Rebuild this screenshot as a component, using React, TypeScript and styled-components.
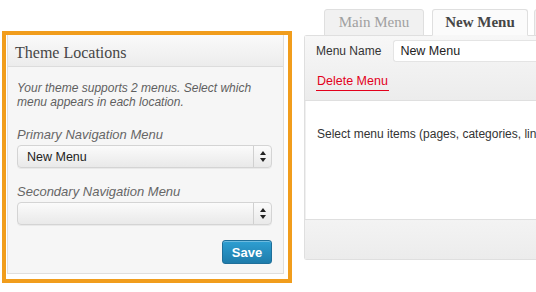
import React from 'react';
import styled, { createGlobalStyle } from 'styled-components';

const GlobalStyle = createGlobalStyle`
  html, body {
    margin: 0;
    padding: 0;
    background: #ffffff;
  }
  body {
    font-family: "Liberation Sans", Arial, sans-serif;
    overflow: hidden;
  }
`;

const Page = styled.div`
  width: 536px;
  height: 292px;
  display: flex;
  align-items: flex-start;
  overflow: hidden;
`;

const Highlight = styled.div`
  flex-shrink: 0;
  margin: 31px 0 0 2px;
  width: 290px;
  height: 252px;
  box-sizing: border-box;
  border: 4px solid #f19d1c;
  padding: 0 4px 5px 1px;
  display: flex;
`;

const Panel = styled.div`
  flex: 1;
  display: flex;
  flex-direction: column;
  border: 1px solid #dfdfdf;
  border-top: none;
  background: #f6f6f6;
`;

const PanelHeader = styled.div`
  height: 32px;
  box-sizing: border-box;
  padding: 4px 0 0 7px;
  display: flex;
  align-items: center;
  font-family: Georgia, "Liberation Serif", serif;
  font-size: 16px;
  color: #464646;
  background: linear-gradient(#fafafa, #ececec);
  border-bottom: 1px solid #dcdcdc;
`;

const PanelBody = styled.div`
  flex: 1;
  padding: 14px 11px 0 9px;
  display: flex;
  flex-direction: column;
`;

const Hint = styled.p`
  margin: 0 0 18px;
  font-style: italic;
  font-size: 12px;
  line-height: 14px;
  color: #5f5f5f;
`;

const FieldLabel = styled.div`
  font-style: italic;
  font-size: 13px;
  line-height: 15px;
  color: #666;
  margin-bottom: 3px;
`;

const Select = styled.div`
  height: 23px;
  box-sizing: border-box;
  display: flex;
  align-items: stretch;
  border: 1px solid #d4d4d4;
  border-radius: 4px;
  background: linear-gradient(#fbfbfb, #e9e9e9);
  box-shadow: 0 1px 0 rgba(0, 0, 0, 0.05);
  margin-bottom: 16px;
`;

const SelectValue = styled.div`
  flex: 1;
  padding-left: 9px;
  display: flex;
  align-items: center;
  font-size: 12.5px;
  color: #222;
`;

const SelectArrow = styled.div`
  width: 17px;
  border-left: 1px solid #d0d0d0;
  display: flex;
  align-items: center;
  justify-content: center;
`;

const Actions = styled.div`
  display: flex;
  justify-content: flex-end;
  margin-top: -1px;
`;

const SaveButton = styled.button`
  height: 24px;
  width: 50px;
  padding: 0;
  border: 1px solid #1f6f9a;
  border-radius: 3px;
  background: linear-gradient(#2e9fd2, #1e7cab);
  color: #fff;
  font-family: "Liberation Sans", Arial, sans-serif;
  font-weight: bold;
  font-size: 13px;
  box-shadow: inset 0 1px 0 rgba(255, 255, 255, 0.3);
`;

const Editor = styled.div`
  margin: 9px 0 0 12px;
  flex: 1;
  min-width: 0;
  display: flex;
  flex-direction: column;
`;

const Tabs = styled.div`
  display: flex;
  gap: 8px;
  padding-left: 20px;
  height: 27px;
  position: relative;
  z-index: 1;
  margin-bottom: -1px;
`;

const Tab = styled.div<{ $active?: boolean }>`
  width: ${p => (p.$active ? 96 : 100)}px;
  box-sizing: border-box;
  display: flex;
  align-items: center;
  justify-content: center;
  border: 1px solid #dfdfdf;
  border-bottom: 1px solid ${p => (p.$active ? '#f7f7f7' : '#dfdfdf')};
  border-radius: 3px 3px 0 0;
  background: ${p => (p.$active ? '#fbfbfb' : '#f1f1f1')};
  font-family: Georgia, "Liberation Serif", serif;
  font-size: 15px;
  font-weight: ${p => (p.$active ? 'bold' : 'normal')};
  color: ${p => (p.$active ? '#464646' : '#a0a0a0')};
  flex-shrink: 0;

  & + & + & {
    margin-left: -2px;
  }
`;

const MenuBox = styled.div`
  width: 320px;
  border: 1px solid #dfdfdf;
  border-right: none;
  border-radius: 3px 0 0 3px;
  display: flex;
  flex-direction: column;
  background: #fff;
`;

const MenuHeader = styled.div`
  height: 65px;
  box-sizing: border-box;
  padding: 4px 0 0 11px;
  background: linear-gradient(#f7f7f7, #ececec);
  border-bottom: 1px solid #dfdfdf;
`;

const NameRow = styled.div`
  display: flex;
  align-items: center;
  gap: 12px;
`;

const NameLabel = styled.span`
  font-size: 12px;
  color: #333;
`;

const NameInput = styled.div`
  flex: 1;
  height: 22px;
  box-sizing: border-box;
  padding-left: 6px;
  display: flex;
  align-items: center;
  background: #fff;
  border: 1px solid #e4e4e4;
  border-right: none;
  border-radius: 3px 0 0 3px;
  font-size: 12.5px;
  color: #222;
`;

const DeleteLink = styled.span`
  display: inline-block;
  margin-top: 12px;
  font-size: 12.5px;
  color: #e3001b;
  padding: 0 1px 2px 1px;
  border-bottom: 1px solid #e3001b;
`;

const MenuBody = styled.div`
  height: 118px;
  box-sizing: border-box;
  padding: 26px 0 0 11px;
  font-size: 12px;
  color: #333;
  white-space: nowrap;
  overflow: hidden;
  border-left: 1px solid #f0f0f0;
`;

const MenuFooter = styled.div`
  height: 39px;
  background: linear-gradient(#f3f3f3, #ececec);
  border-top: 1px solid #dfdfdf;
`;

const Arrows = () => (
  <svg width="6" height="11" viewBox="0 0 6 11">
    <path d="M3 0 L6 4 L0 4 Z" fill="#222" />
    <path d="M3 11 L6 7 L0 7 Z" fill="#222" />
  </svg>
);

export default function App() {
  return (
    <Page>
      <GlobalStyle />
      <Highlight>
        <Panel>
          <PanelHeader>Theme Locations</PanelHeader>
          <PanelBody>
            <Hint>Your theme supports 2 menus. Select which menu appears in each location.</Hint>
            <FieldLabel>Primary Navigation Menu</FieldLabel>
            <Select>
              <SelectValue>New Menu</SelectValue>
              <SelectArrow><Arrows /></SelectArrow>
            </Select>
            <FieldLabel>Secondary Navigation Menu</FieldLabel>
            <Select>
              <SelectValue />
              <SelectArrow><Arrows /></SelectArrow>
            </Select>
            <Actions>
              <SaveButton>Save</SaveButton>
            </Actions>
          </PanelBody>
        </Panel>
      </Highlight>
      <Editor>
        <Tabs>
          <Tab>Main Menu</Tab>
          <Tab $active>New Menu</Tab>
          <Tab />
        </Tabs>
        <MenuBox>
          <MenuHeader>
            <NameRow>
              <NameLabel>Menu Name</NameLabel>
              <NameInput>New Menu</NameInput>
            </NameRow>
            <DeleteLink>Delete Menu</DeleteLink>
          </MenuHeader>
          <MenuBody>Select menu items (pages, categories, links) from the boxes at left to begin building your custom menu.</MenuBody>
          <MenuFooter />
        </MenuBox>
      </Editor>
    </Page>
  );
}
